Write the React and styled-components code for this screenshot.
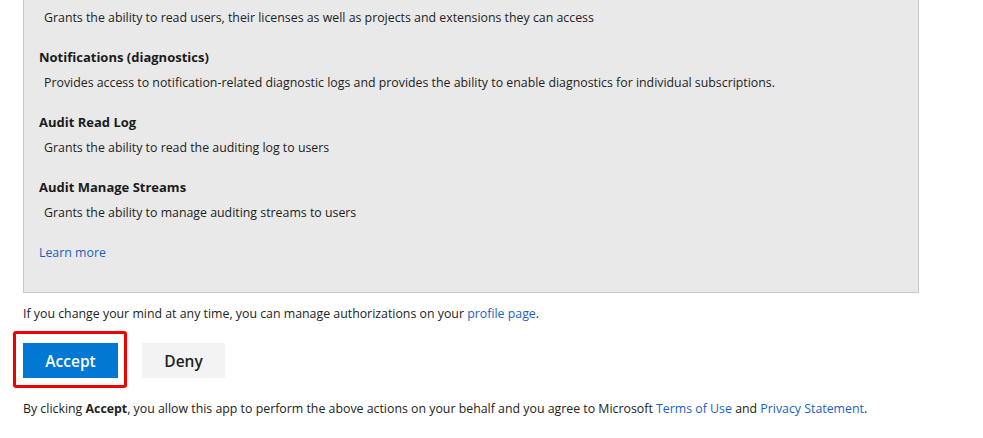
import React from "react";
import styled, { createGlobalStyle } from "styled-components";

const Global = createGlobalStyle`
  html, body { margin: 0; padding: 0; background: #fff; }
  body { font-family: "Segoe UI", "Open Sans", "Noto Sans", sans-serif; color: #222; font-size: 12.35px; overflow: hidden; }
`;

const Page = styled.div`
  padding: 0 23px;
  width: 896px;
`;

const Panel = styled.section`
  margin-top: -20px;
  background: #e9e9e9;
  border: 1px solid #c8c8c8;
  padding: 27px 15px 29px 15px;
  display: flex;
  flex-direction: column;
  gap: 20px;
`;

const Item = styled.div`
  display: flex;
  flex-direction: column;
  gap: 5px;
`;

const Title = styled.div`
  font-weight: 700;
  line-height: 19px;
  margin-bottom: 1px;
  font-size: 13px;
  color: #1b1b1b;
`;

const Desc = styled.div`
  line-height: 20px;
  padding-left: 5px;
`;

const Link = styled.a`
  color: #1a5fc2;
  text-decoration: none;
  line-height: 20px;
`;

const Note = styled.p`
  margin: 11px 0 0;
  line-height: 20px;
`;

const Buttons = styled.div`
  display: flex;
  gap: 24px;
  margin-top: 19px;
`;

const Highlight = styled.div`
  position: relative;
  &::after {
    content: "";
    position: absolute;
    top: -12px;
    left: -10px;
    right: -9px;
    bottom: -10px;
    border: 3px solid #f20000;
    border-radius: 3px;
    pointer-events: none;
  }
`;

const Button = styled.button`
  width: ${(p) => p.$w}px;
  height: 35px;
  border: none;
  padding: 0;
  font-family: inherit;
  font-size: 15.5px;
  font-weight: 600;
  background: ${(p) => (p.$primary ? "#0078d4" : "#f3f3f3")};
  color: ${(p) => (p.$primary ? "#fff" : "#222")};
`;

const Footer = styled.p`
  margin: 21px 0 0;
  line-height: 20px;
`;

const items = [
  { title: "Notifications (diagnostics)", desc: "Provides access to notification-related diagnostic logs and provides the ability to enable diagnostics for individual subscriptions." },
  { title: "Audit Read Log", desc: "Grants the ability to read the auditing log to users" },
  { title: "Audit Manage Streams", desc: "Grants the ability to manage auditing streams to users" },
];

export default function App() {
  return (
    <>
      <Global />
      <Page>
        <Panel>
          <Item>
            <Desc>Grants the ability to read users, their licenses as well as projects and extensions they can access</Desc>
          </Item>
          {items.map((it) => (
            <Item key={it.title}>
              <Title>{it.title}</Title>
              <Desc>{it.desc}</Desc>
            </Item>
          ))}
          <Item>
            <Link href="#">Learn more</Link>
          </Item>
        </Panel>
        <Note>
          If you change your mind at any time, you can manage authorizations on your <Link href="#">profile page</Link>.
        </Note>
        <Buttons>
          <Highlight>
            <Button $primary $w={95}>Accept</Button>
          </Highlight>
          <Button $w={83}>Deny</Button>
        </Buttons>
        <Footer>
          By clicking <b>Accept</b>, you allow this app to perform the above actions on your behalf and you agree to Microsoft <Link href="#">Terms of Use</Link> and <Link href="#">Privacy Statement</Link>.
        </Footer>
      </Page>
    </>
  );
}
